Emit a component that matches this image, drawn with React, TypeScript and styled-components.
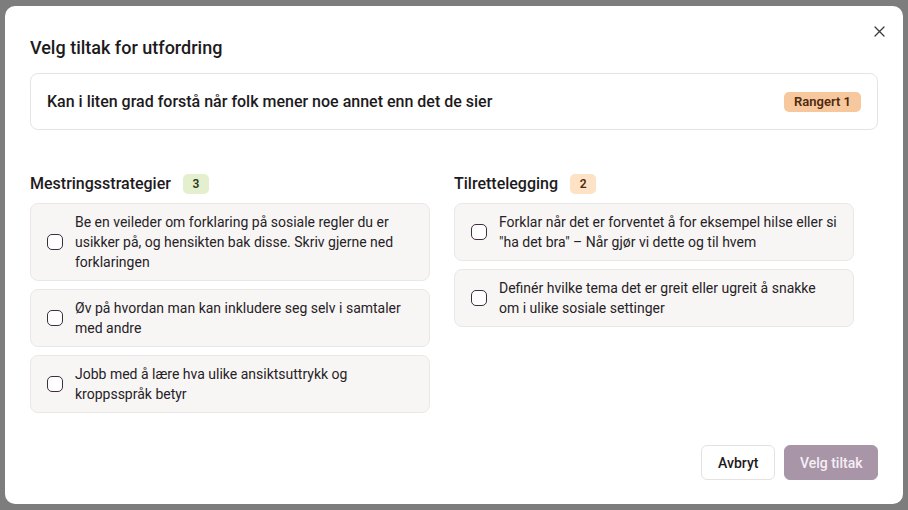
import React from "react";
import styled, { createGlobalStyle } from "styled-components";

const Global = createGlobalStyle`
  html, body { margin: 0; padding: 0; }
  body {
    font-family: Roboto, "Liberation Sans", Arial, sans-serif;
    background: #7d7d7d;
    color: #1f1b1f;
  }
  * { box-sizing: border-box; }
`;

const Overlay = styled.div`
  width: 908px;
  height: 510px;
  display: flex;
  align-items: center;
  justify-content: center;
  background: #7d7d7d;
`;

const Modal = styled.div`
  position: relative;
  width: 898px;
  height: 498px;
  background: #ffffff;
  border-radius: 10px;
  padding: 28px 25px 24px 25px;
  display: flex;
  flex-direction: column;
`;

const Title = styled.h2`
  margin: 0;
  font-size: 18px;
  line-height: 28px;
  font-weight: 500;
  color: #1d1a1d;
`;

const CloseButton = styled.button`
  position: absolute;
  top: 17px;
  right: 16px;
  width: 16px;
  height: 16px;
  padding: 0;
  border: none;
  background: transparent;
  display: flex;
  align-items: center;
  justify-content: center;
  color: #3a3a3a;
`;

const ChallengeCard = styled.div`
  margin-top: 11px;
  border: 1px solid #e6e3e3;
  border-radius: 8px;
  padding: 16px 16px 15px 16px;
  display: flex;
  align-items: center;
  justify-content: space-between;
`;

const ChallengeText = styled.span`
  font-size: 16px;
  line-height: 24px;
  font-weight: 500;
  color: #1d1a1d;
`;

const Badge = styled.span<{ $bg: string; $fg: string; $w?: number; $big?: boolean }>`
  display: inline-flex;
  align-items: center;
  justify-content: center;
  height: 20px;
  min-width: ${(p) => (p.$w ? `${p.$w}px` : "auto")};
  padding: 0 ${(p) => (p.$big ? "10px" : "8px")};
  border-radius: 5px;
  background: ${(p) => p.$bg};
  color: ${(p) => p.$fg};
  font-size: ${(p) => (p.$big ? "13px" : "12px")};
  font-weight: 600;
  line-height: 20px;
`;

const Columns = styled.div`
  margin-top: 44px;
  display: grid;
  grid-template-columns: 1fr 1fr;
`;

const Column = styled.section`
  padding-right: 24px;
  display: flex;
  flex-direction: column;
`;

const SectionHeader = styled.div`
  display: flex;
  align-items: center;
  gap: 12px;
  height: 20px;
  margin-bottom: 9px;
`;

const SectionTitle = styled.h3`
  margin: 0;
  font-size: 16px;
  line-height: 20px;
  font-weight: 500;
  color: #1d1a1d;
`;

const OptionList = styled.div`
  display: flex;
  flex-direction: column;
  gap: 8px;
`;

const Option = styled.label`
  display: flex;
  align-items: center;
  gap: 12px;
  padding: 8px 16px 8px 16px;
  background: #f8f6f5;
  border: 1px solid #ebe7e6;
  border-radius: 8px;
  cursor: pointer;
`;

const Check = styled.span`
  flex: 0 0 auto;
  width: 16px;
  height: 16px;
  border: 1.5px solid #3e2c40;
  border-radius: 5px;
  background: #ffffff;
`;

const OptionText = styled.span`
  font-size: 14px;
  line-height: 20px;
  color: #262226;
`;

const Footer = styled.div`
  margin-top: auto;
  display: flex;
  justify-content: flex-end;
  gap: 9px;
`;

const Button = styled.button<{ $primary?: boolean }>`
  height: 35px;
  padding: 0 ${(p) => (p.$primary ? "14.5px" : "16px")};
  border-radius: 6px;
  font-family: Roboto, "Liberation Sans", Arial, sans-serif;
  font-size: 14px;
  font-weight: 500;
  border: 1px solid ${(p) => (p.$primary ? "#a995a8" : "#e4e1e1")};
  background: ${(p) => (p.$primary ? "#a995a8" : "#ffffff")};
  color: ${(p) => (p.$primary ? "#f5eff5" : "#1d1a1d")};
`;

const mestring = [
  "Be en veileder om forklaring på sosiale regler du er usikker på, og hensikten bak disse. Skriv gjerne ned forklaringen",
  "Øv på hvordan man kan inkludere seg selv i samtaler med andre",
  "Jobb med å lære hva ulike ansiktsuttrykk og kroppsspråk betyr",
];

const tilrette = [
  "Forklar når det er forventet å for eksempel hilse eller si \"ha det bra\" – Når gjør vi dette og til hvem",
  "Definér hvilke tema det er greit eller ugreit å snakke om i ulike sosiale settinger",
];

export default function App() {
  return (
    <>
      <Global />
      <Overlay>
        <Modal>
          <CloseButton aria-label="Lukk">
            <svg width="11" height="11" viewBox="0 0 11 11" fill="none">
              <path d="M1 1L10 10M10 1L1 10" stroke="#3a3a3a" strokeWidth="1.3" strokeLinecap="round" />
            </svg>
          </CloseButton>
          <Title>Velg tiltak for utfordring</Title>
          <ChallengeCard>
            <ChallengeText>Kan i liten grad forstå når folk mener noe annet enn det de sier</ChallengeText>
            <Badge $bg="#f7c89d" $fg="#4f2a10" $big>Rangert 1</Badge>
          </ChallengeCard>
          <Columns>
            <Column>
              <SectionHeader>
                <SectionTitle>Mestringsstrategier</SectionTitle>
                <Badge $bg="#e3efcd" $fg="#2b3818" $w={26}>3</Badge>
              </SectionHeader>
              <OptionList>
                {mestring.map((t) => (
                  <Option key={t}>
                    <Check />
                    <OptionText>{t}</OptionText>
                  </Option>
                ))}
              </OptionList>
            </Column>
            <Column>
              <SectionHeader>
                <SectionTitle>Tilrettelegging</SectionTitle>
                <Badge $bg="#fde2c6" $fg="#4f2a10" $w={26}>2</Badge>
              </SectionHeader>
              <OptionList>
                {tilrette.map((t) => (
                  <Option key={t}>
                    <Check />
                    <OptionText>{t}</OptionText>
                  </Option>
                ))}
              </OptionList>
            </Column>
          </Columns>
          <Footer>
            <Button>Avbryt</Button>
            <Button $primary>Velg tiltak</Button>
          </Footer>
        </Modal>
      </Overlay>
    </>
  );
}
